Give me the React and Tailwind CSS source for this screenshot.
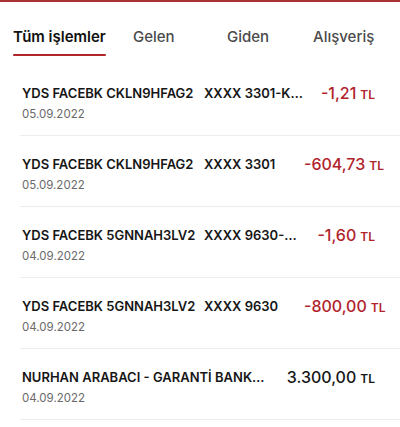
import React from "react";

const tabs = ["Tüm işlemler", "Gelen", "Giden", "Alışveriş"];

const rows = [
  { title: "YDS FACEBK CKLN9HFAG2", card: "XXXX 3301-KAR", date: "05.09.2022", amount: "-1,21", neg: true },
  { title: "YDS FACEBK CKLN9HFAG2", card: "XXXX 3301", date: "05.09.2022", amount: "-604,73", neg: true },
  { title: "YDS FACEBK 5GNNAH3LV2", card: "XXXX 9630-KAR", date: "04.09.2022", amount: "-1,60", neg: true },
  { title: "YDS FACEBK 5GNNAH3LV2", card: "XXXX 9630", date: "04.09.2022", amount: "-800,00", neg: true },
  { title: "NURHAN ARABACI - GARANTİ BANKASI A.Ş.", date: "04.09.2022", amount: "3.300,00", neg: false },
];

const TxRow = ({ tx }) => (
  <div className="ml-5 border-b border-[#ececec] pt-[21px] pb-[14px] pr-[25px]">
    <div className="flex items-center h-4">
      {tx.card ? (
        <>
          <div className="w-[184px] pl-[2px] shrink-0 text-[13px] font-semibold text-[#161616] whitespace-nowrap">{tx.title}</div>
          <div className="w-[100px] shrink-0 text-[13px] font-semibold text-[#161616] truncate">{tx.card}</div>
        </>
      ) : (
        <div className="w-[250px] pl-[2px] shrink-0 text-[13px] font-semibold text-[#161616] truncate">{tx.title}</div>
      )}
      <div className={`ml-auto whitespace-nowrap leading-4 ${tx.neg ? "text-[#b1232b]" : "text-[#161616]"}`}>
        <span className="text-[16px] font-medium">{tx.amount}</span>
        <span className="text-[12px] font-semibold ml-[4px]">TL</span>
      </div>
    </div>
    <div className="mt-[5px] pl-[2px] text-[11.5px] leading-[14px] text-[#6a6a6a]">{tx.date}</div>
  </div>
);

export default function App() {
  return (
    <div className="w-[400px] h-[427px] bg-white overflow-hidden" style={{ fontFamily: "Inter, 'Noto Sans', sans-serif" }}>
      <div className="h-[2px] bg-[#a83434]" />
      <div className="h-[63px] flex pl-[13px] pt-[22px]">
        {tabs.map((t, i) => (
          <div
            key={t}
            className={
              i === 0
                ? "w-[120px] shrink-0"
                : i === 1
                ? "w-[94px] shrink-0"
                : i === 2
                ? "w-[86px] shrink-0"
                : "shrink-0"
            }
          >
            <div className={`inline-block text-[15px] leading-5 ${i === 0 ? "font-semibold text-[#111]" : "font-medium text-[#4a4a4a]"}`}>
              {t}
              {i === 0 && <div className="h-[2px] mt-[7px] bg-[#b1262b] rounded-full" />}
            </div>
          </div>
        ))}
      </div>
      {rows.map((tx, i) => (
        <TxRow key={i} tx={tx} />
      ))}
    </div>
  );
}
